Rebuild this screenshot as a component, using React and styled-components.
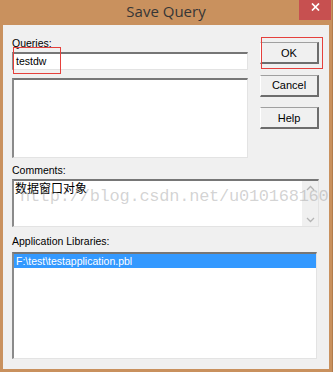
import React from "react";
import styled, { createGlobalStyle, css } from "styled-components";

const GlobalStyle = createGlobalStyle`
  html, body {
    margin: 0;
    padding: 0;
    background: #c9915e;
  }
  body {
    font-family: "Liberation Sans", Arial, sans-serif;
  }
`;

const sunken = css`
  box-sizing: border-box;
  background: #fff;
  border-style: solid;
  border-width: 2px 1px 1px 2px;
  border-color: #767676 #e3e3e3 #e3e3e3 #8a8a8a;
`;

const Window = styled.div`
  position: relative;
  width: 333px;
  height: 372px;
  box-sizing: border-box;
  padding: 0 3px 3px 3px;
  background: #c9915e;
  border-right: 1px solid #b27c4c;
  display: flex;
  flex-direction: column;
  overflow: hidden;
`;

const TitleBar = styled.div`
  height: 25px;
  margin: 0 -3px;
  display: grid;
  grid-template-columns: 1fr auto 1fr;
  align-items: start;
`;

const Title = styled.div`
  grid-column: 2;
  font-family: "Open Sans", "Noto Sans", sans-serif;
  font-size: 15px;
  line-height: 22px;
  color: #363636;
`;

const CloseButton = styled.div`
  grid-column: 3;
  justify-self: end;
  width: 32px;
  height: 20px;
  margin-right: 1px;
  background: #c75050;
  display: flex;
  align-items: center;
  justify-content: center;
  svg {
    margin-top: -6px;
  }
`;

const Client = styled.div`
  flex: 1;
  background: #f0f0f0;
  padding: 12px 11px 10px 9px;
  display: flex;
  flex-direction: column;
  font-size: 10.5px;
  color: #000;
`;

const TopSection = styled.div`
  display: flex;
  gap: 12px;
`;

const Column = styled.div`
  width: 238px;
  display: flex;
  flex-direction: column;
`;

const Label = styled.div`
  height: 13px;
  line-height: 13px;
  margin-top: ${(p) => p.$top || 0}px;
  margin-bottom: ${(p) => p.$bottom || 2}px;
  white-space: nowrap;
`;

const Input = styled.div`
  ${sunken};
  height: 18px;
  padding: 0 2px;
  line-height: 15px;
`;

const ListBox = styled.div`
  ${sunken};
  width: ${(p) => p.$width}px;
  height: ${(p) => p.$height}px;
  margin-top: ${(p) => p.$top || 0}px;
`;

const Selected = styled.div`
  height: 14px;
  line-height: 14px;
  padding: 0 2px;
  background: #3399ff;
  color: #fff;
`;

const ButtonColumn = styled.div`
  padding-top: 5px;
  display: flex;
  flex-direction: column;
  gap: 10.5px;
`;

const Button = styled.div`
  box-sizing: border-box;
  width: 59px;
  height: 22px;
  background: #f0f0f0;
  border-style: solid;
  border-width: 1px 2px 2px 1px;
  border-color: #a0a0a0 #6d6d6d #6d6d6d #fff;
  display: flex;
  align-items: center;
  justify-content: center;
  font-size: 11px;
`;

const CommentsBox = styled.div`
  ${sunken};
  width: 307px;
  height: 48px;
  display: flex;
`;

const CommentText = styled.div`
  flex: 1;
  padding: 1px 1px 0;
  font-family: "Liberation Sans", "Noto Sans CJK SC", sans-serif;
  font-size: 12px;
  line-height: 14px;
`;

const ScrollTrack = styled.div`
  width: 16px;
  background: #f0f0f0;
  display: flex;
  flex-direction: column;
  justify-content: space-between;
  align-items: center;
  padding: 4px 0 3px;
`;

const Watermark = styled.div`
  position: absolute;
  left: 20px;
  top: 188px;
  font-family: "Liberation Mono", monospace;
  font-size: 17px;
  line-height: 17px;
  letter-spacing: -0.25px;
  color: rgba(150, 150, 150, 0.42);
  white-space: nowrap;
  pointer-events: none;
`;

const Annotation = styled.div`
  position: absolute;
  left: ${(p) => p.$x}px;
  top: ${(p) => p.$y}px;
  width: ${(p) => p.$w}px;
  height: ${(p) => p.$h}px;
  box-sizing: border-box;
  border: 1px solid #e5403c;
  pointer-events: none;
`;

const Chevron = ({ up }) => (
  <svg width="9" height="6" viewBox="0 0 9 6">
    <polyline
      points={up ? "1,5 4.5,1.5 8,5" : "1,1 4.5,4.5 8,1"}
      fill="none"
      stroke="#b4b4b4"
      strokeWidth="1.3"
    />
  </svg>
);

export default function App() {
  return (
    <>
      <GlobalStyle />
      <Window>
        <TitleBar>
          <Title>Save Query</Title>
          <CloseButton>
            <svg width="9" height="8" viewBox="0 0 9 8">
              <path d="M1 0.5 L8 7.5 M8 0.5 L1 7.5" stroke="#fff" strokeWidth="1.7" />
            </svg>
          </CloseButton>
        </TitleBar>
        <Client>
          <TopSection>
            <Column>
              <Label>Queries:</Label>
              <Input>testdw</Input>
              <ListBox $width={236} $height={80} $top={8} />
            </Column>
            <ButtonColumn>
              <Button>OK</Button>
              <Button>Cancel</Button>
              <Button>Help</Button>
            </ButtonColumn>
          </TopSection>
          <Label $top={6}>Comments:</Label>
          <CommentsBox>
            <CommentText>数据窗口对象</CommentText>
            <ScrollTrack>
              <Chevron up />
              <Chevron />
            </ScrollTrack>
          </CommentsBox>
          <Label $top={8} $bottom={4}>
            Application Libraries:
          </Label>
          <ListBox $width={305} $height={107}>
            <Selected>F:\test\testapplication.pbl</Selected>
          </ListBox>
        </Client>
        <Watermark>http://blog.csdn.net/u010168160</Watermark>
        <Annotation $x={13} $y={47} $w={48} $h={27} />
        <Annotation $x={261} $y={37} $w={62} $h={32} />
      </Window>
    </>
  );
}
